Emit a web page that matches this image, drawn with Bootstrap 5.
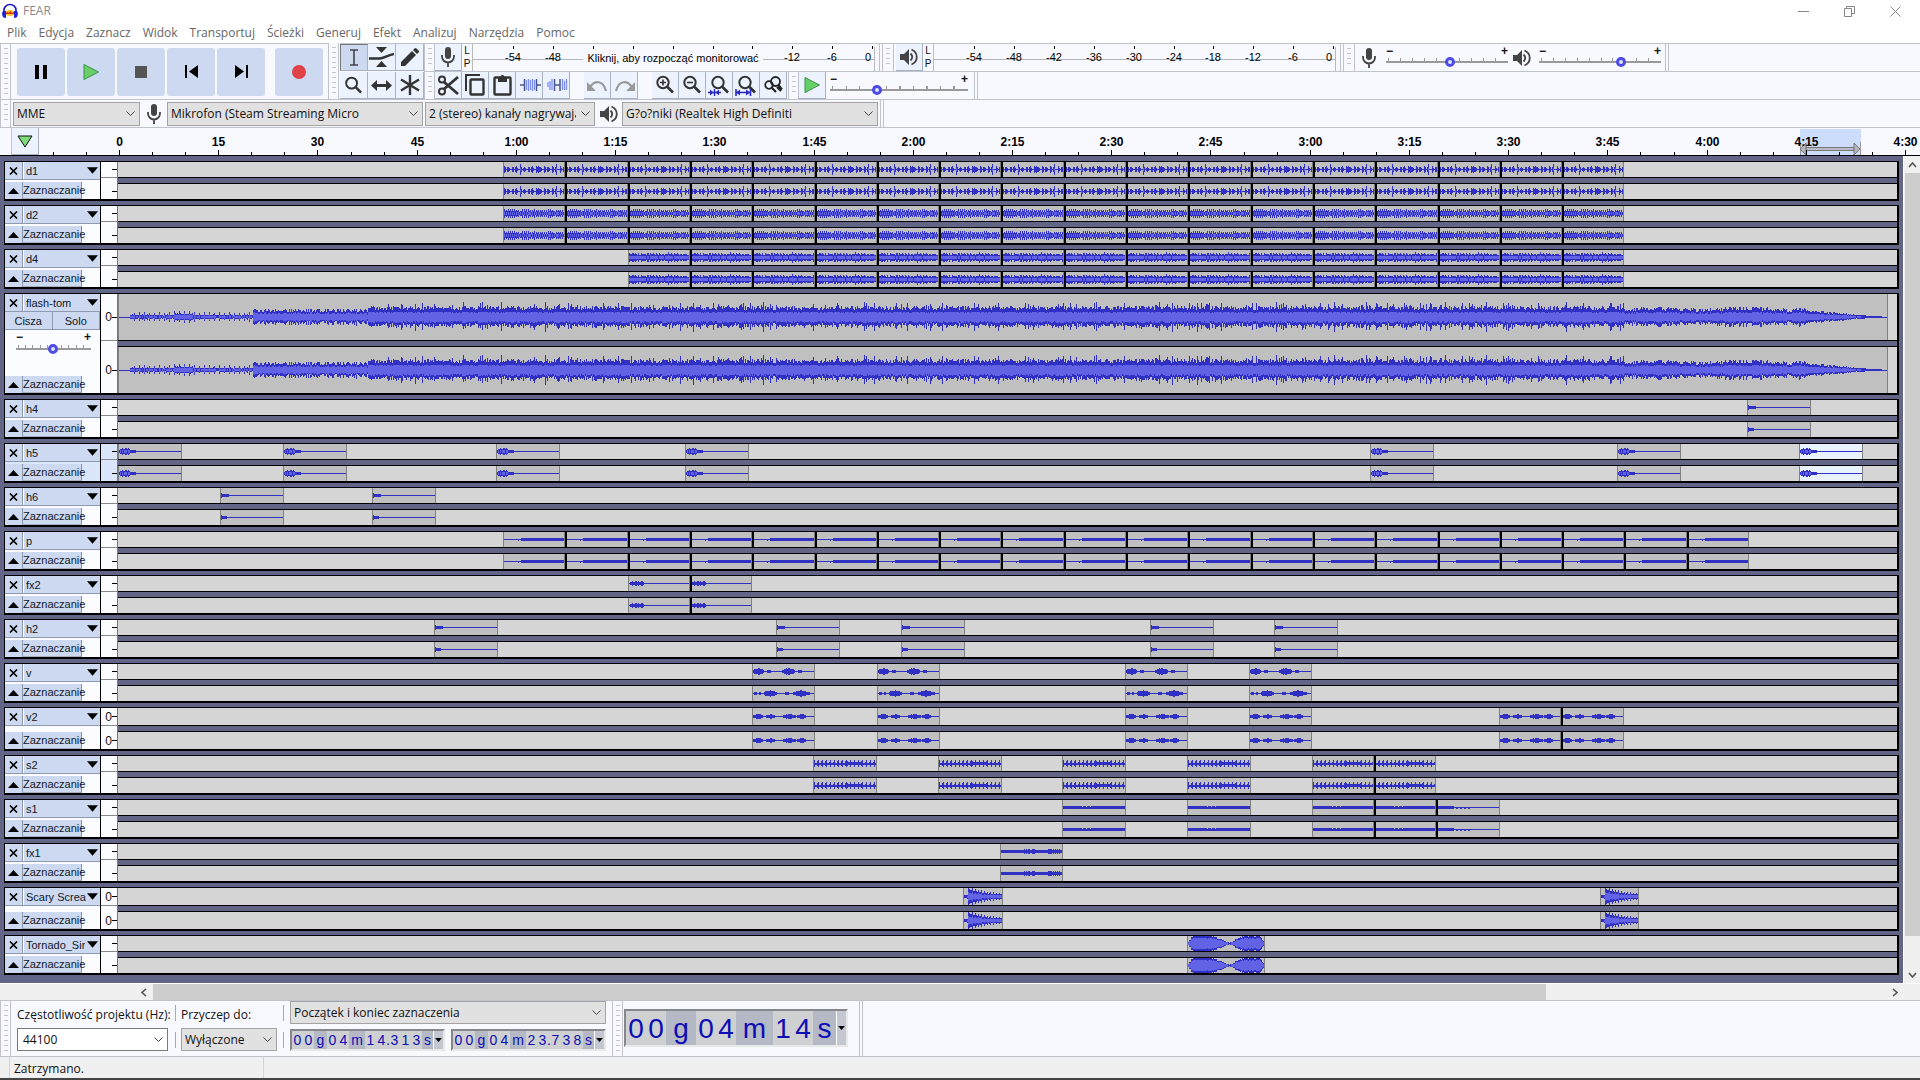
<!DOCTYPE html>
<html lang="pl">
<head>
<meta charset="utf-8">
<meta name="viewport" content="width=device-width, initial-scale=1">
<title>FEAR</title>
<link href="https://cdn.jsdelivr.net/npm/bootstrap@5.3.0/dist/css/bootstrap.min.css" rel="stylesheet">
<style>
:root{--line:#bfc3cb;--panel:#f8f9ff;--key:#ccd9f1;--desk:#636587}
body{font-family:"Open Sans","Noto Sans",sans-serif;font-size:12px;line-height:16px;color:#111;background:#fff}
button{padding:0;border:0;color:inherit}
svg{display:block;flex:none}
.titlebar{height:22px;color:#8a8a8a;padding:0 2px 0 2px;gap:5px}
.winbtn{width:46px;height:22px;background:none}
.menus{height:21px;padding-left:7px;gap:12px}
.menus a{color:#666;text-decoration:none;line-height:22px}
.dock{background:var(--panel)}
.dock-row{height:28px;border-top:1px solid var(--line)}
.grip{width:11px;flex:none;border-left:1px solid var(--line);border-right:1px solid var(--line);background:repeating-linear-gradient(#c4c7cf 0 1px,transparent 1px 5px) 3px 4px/4px calc(100% - 7px) no-repeat}
.grip-plain{width:12px;flex:none;border-right:1px solid var(--line)}
.dock-end{width:4px;border-left:1px solid var(--line);border-right:1px solid var(--line);flex:none}
.transport{height:56px;border-top:1px solid var(--line)}
.keys{gap:2px;padding:0 5px 0 6px}
.keys button{width:48px;height:48px;border-radius:3px;background:var(--key)}
.keys .rec{margin-left:8px}
.tbtn{width:27px;height:27px;flex:none;background:#edf3fe;border-right:1px solid #a9b2c3;border-bottom:1px solid #a9b2c3;display:flex;align-items:center;justify-content:center}
.gap-l2{margin-left:2px}
.gap-l14{margin-left:14px}
.gap-l6{margin-left:6px}
.gap-l1{margin-left:1px}
.toolgrid{display:grid;grid-template-columns:repeat(3,28px);grid-template-rows:28px 27px;margin-left:1px;border-top:1px solid var(--line);height:56px}
.toolgrid .tbtn{width:28px}
.toolgrid .tbtn.on{background:var(--key);border-top:1px solid #777;border-left:1px solid #777}
.lp{width:10px;font:10px/13px "Liberation Sans",sans-serif;text-align:center;flex:none}
.mtext{font:11px "Liberation Sans",sans-serif}
.vol{font:bold 12px/9px "Liberation Sans",sans-serif;flex:none;padding-top:3px}
.vol .ends{height:9px}
.vol input{display:block;width:100%;height:11px;margin:0;appearance:none;-webkit-appearance:none;background:linear-gradient(#9a9a9a,#9a9a9a) 0 5px/100% 2px no-repeat,repeating-linear-gradient(90deg,#9a9a9a 0 1px,transparent 1px 10%) 2px 2px/calc(100% - 3px) 4px no-repeat}
.vol input::-webkit-slider-thumb{-webkit-appearance:none;width:10px;height:10px;border-radius:50%;border:3px solid #4b4be8;background:#dfe4ee}
.v122{width:122px}.v138{width:138px}
.v-gain{padding:4px 9px 0 11px;line-height:6px}
.pick{height:24px;border:1px solid #a3a3a3;border-radius:0;background:#e1e1e1 url("data:image/svg+xml,%3Csvg xmlns='http://www.w3.org/2000/svg' width='9' height='6'%3E%3Cpath d='M.5.5l4 4 4-4' fill='none' stroke='%23444'/%3E%3C/svg%3E") right 4px center no-repeat;appearance:none;-webkit-appearance:none;font-size:12px;line-height:20px;padding:0 18px 0 3px;color:#111;flex:none}
.w-mme{width:127px}.w-dev{width:256px}.w-chn{width:170px;text-overflow:clip}.w-snap{width:96px}
.icobox{width:27px;display:flex;justify-content:center;flex:none}
.ruler{height:29px;border-top:1px solid var(--line);border-bottom:1px solid #000;background:var(--panel)}
.ruler text{font:bold 12px "Liberation Sans",sans-serif}
.desk{background:var(--desk)}
.tracks{padding:5px 4px 4px 4px;border-right:1px solid #fff;min-width:0}
.trk{border:solid #000;border-width:1px 2px 2px 1px;margin-bottom:4px;font:11px/16px "Liberation Sans",sans-serif;background:#fff}
.trk-head{width:96px;flex:none;border-right:1px solid #000;background:#fbfcff}
.trk-head button{background:var(--key);color:#101828}
.trk-top{height:18px;border-bottom:1px solid #8d99ae}
.trk-head .xbtn{width:18px;border-right:1px solid #8d99ae;display:flex;align-items:center;justify-content:center}
.trk-head .nm{display:flex;align-items:center;justify-content:space-between;border-left:1px solid #fff;padding:0 2px;overflow:hidden;white-space:nowrap}
.nm span{overflow:hidden}
.trk-low{height:17px}
.trk-low .selbtn{width:59px;border-right:1px solid #8a8f98;border-bottom:1px solid #a9afba;text-align:left;white-space:nowrap}
.ms-row{height:18px}
.ms-row button{border-bottom:1px solid #8d99ae;border-right:1px solid #8d99ae}
.ampl{width:17px;flex:none;border-right:1px solid #777;background:#fbfcff;font-size:12px}
.ampl div{display:flex;align-items:center;justify-content:flex-end}
.ampl div+div{padding-top:6px;border-top:1px solid #8a8a8a}
.ampl i{width:5px;height:1px;background:#000}
.picked .trk-head,.picked .ampl{background:#d9e6fc}
.split{height:7px;border:solid #000;border-width:1px 0;background:var(--desk)}
.lanes{min-width:0}
.lane-svg{width:100%;background:#d5d5d5}
.h15{height:15px}.h17{height:17px}.h46{height:46px}
.m1-15{height:15px}.m2-15{height:22px}.m1-17{height:17px}.m2-17{height:24px}.m1-46{height:46px}.m2-46{height:53px}
.vscroll{width:16px;background:#f0f0f0}
.vthumb{height:763px;background:#cdcdcd;margin-left:1px}
.sarr{height:17px;display:flex;align-items:center;justify-content:center}
.hscroll{height:17px;background:#f0f0f0;border-top:1px solid #fff;padding-left:135px;padding-right:16px}
.harr{width:18px;display:flex;align-items:center;justify-content:center}
.hthumb{background:#cdcdcd;width:1393px}
.foot{height:57px;border-top:1px solid var(--line);border-bottom:1px solid var(--line)}
.foot .pick{height:23px}
.fcol{display:flex;flex-direction:column;justify-content:space-between;padding:6px 6px 5px 5px}
.fcol-rate{padding:6px 7px 5px 6px;width:164px;white-space:nowrap}
.fcol-sel{padding:0 6px 5px 6px}
.tcs{gap:6px}
.bigbox{padding:0 11px 1px 1px}
.vsep{border-left:1px solid #aaa;height:16px}
.rate{width:151px;border:1px solid #7a7a7a;background-color:#fff;padding:0 0 0 5px}
.tc{border:2px solid;border-color:#85878c #e8e8e8 #e8e8e8 #85878c;background:#b5b9c5;color:#0d0db4;font-family:"Liberation Sans",sans-serif;height:22px;font-size:14px;line-height:19px}
.tc span{display:flex;justify-content:center}
.tc b{font-weight:400;width:11px;text-align:center}
.tc .dg{background:#cfd0d2}
.tc .dot{width:2px;display:flex;justify-content:center}
.tc .u1{width:13px}.tc .u2{width:16px}.tc .u3{width:11px}
.tc button{width:10px;background:#c3c7d2;border-left:1px solid #fff;display:flex;align-items:center;justify-content:center}
.tc.big{height:38px;font-size:28px;line-height:36px}
.tc.big b{width:20px}
.tc.big .u1{width:30px}.tc.big .u2{width:37px}.tc.big .u3{width:23px}
.status{background:#f0f0f0;height:23px;border-bottom:2px solid #444;padding-left:9px;line-height:23px}
.status div{border-left:1px solid #d5d5d5;padding-left:4px}
.status .s1{width:254px}
</style>
<script src="https://cdn.jsdelivr.net/npm/bootstrap@5.3.0/dist/js/bootstrap.bundle.min.js"></script>
</head>
<body>
<svg width="0" height="0" class="position-absolute">
  <defs>
    <symbol id="mic" viewBox="0 0 16 20"><rect x="5" y="0" width="6" height="12" rx="3" fill="#444"/><path d="M2 8v1.500a6 6 0 0 0 12 0V8M8 15.500V20" fill="none" stroke="#444" stroke-width="1.800"/></symbol>
    <symbol id="spk" viewBox="0 0 18 18"><path d="M0 6h4l5-5v16l-5-5H0z" fill="#444"/><path d="M10.500 5.500q3.500 3.500 0 7M11.500 1.500c7 3 7 12 0 15" fill="none" stroke="#444" stroke-width="1.800"/></symbol>
    <symbol id="mag" viewBox="0 0 20 20"><circle cx="8" cy="7.500" r="5.700" fill="none" stroke="#333" stroke-width="2"/><path d="M12 11.500l6 6" stroke="#333" stroke-width="2.600"/></symbol>
    <symbol id="down" viewBox="0 0 12 7"><path d="M0 0h12L6 7z"/></symbol>
    <symbol id="up" viewBox="0 0 11 6"><path d="M5.500 0L11 6H0z"/></symbol>
    <symbol id="cross" viewBox="0 0 9 8"><path d="M1 .5l7 7M8 .5l-7 7" stroke="#000" stroke-width="1.600"/></symbol>
    <symbol id="play" viewBox="0 0 16 16"><path d="M1 0.500L15.500 8L1 15.500z" fill="#66cf66" stroke="#3f8f4a"/></symbol>
  </defs>
</svg>

<div class="d-flex flex-column min-vh-100">
  <header>
    <div class="titlebar d-flex align-items-center">
      <svg width="16" height="16" viewBox="0 0 16 16"><ellipse cx="8" cy="10" rx="5" ry="3" fill="#f6c21c"/><path d="M3.500 10.500h9l-1.500-1-1 1.500-1.500-2.500-1.500 2-1-1z" fill="#e03018" stroke="#e03018"/><path d="M2 9V7a6 5.500 0 0 1 12 0v2" fill="none" stroke="#1414c8" stroke-width="1.600"/><path d="M1 8c-1.500 2-1 5 .5 6.500L4 15V8zM15 8c1.500 2 1 5-.5 6.500L12 15V8z" fill="#2323dd"/></svg>
      <span>FEAR</span>
      <div class="d-flex ms-auto">
        <button class="winbtn" aria-label="Minimalizuj"><svg class="mx-auto" width="11" height="11"><path d="M0 5.500h11" stroke="#888"/></svg></button>
        <button class="winbtn" aria-label="Przywróć"><svg class="mx-auto" width="11" height="11"><path d="M.5 2.500h7v8h-7zM2.500 2V.5h8v7H8" fill="none" stroke="#888"/></svg></button>
        <button class="winbtn" aria-label="Zamknij"><svg class="mx-auto" width="11" height="11"><path d="M.5.5l10 10M10.500.5l-10 10" stroke="#888"/></svg></button>
      </div>
    </div>
    <nav class="menus d-flex">
      <a href="#">Plik</a><a href="#">Edycja</a><a href="#">Zaznacz</a><a href="#">Widok</a><a href="#">Transportuj</a><a href="#">Ścieżki</a><a href="#">Generuj</a><a href="#">Efekt</a><a href="#">Analizuj</a><a href="#">Narzędzia</a><a href="#">Pomoc</a>
    </nav>
  </header>

  <div class="dock d-flex">
    <div class="transport d-flex">
      <div class="grip"></div>
      <div class="keys d-flex align-items-center">
        <button aria-label="Wstrzymaj"><svg class="mx-auto" width="12" height="14"><path d="M0 0h4v14H0zM8 0h4v14H8z"/></svg></button>
        <button aria-label="Odtwórz"><svg class="mx-auto" width="16" height="16"><use href="#play"/></svg></button>
        <button aria-label="Zatrzymaj"><svg class="mx-auto" width="12" height="12"><path d="M0 0h12v12H0z" fill="#555"/></svg></button>
        <button aria-label="Na początek"><svg class="mx-auto" width="13" height="13"><path d="M0 0h2v13H0zM13 0v13L4 6.500z"/></svg></button>
        <button aria-label="Na koniec"><svg class="mx-auto" width="13" height="13"><path d="M11 0h2v13h-2zM0 0v13l9-6.500z"/></svg></button>
        <button class="rec" aria-label="Nagrywaj"><svg class="mx-auto" width="14" height="14"><circle cx="7" cy="7" r="7" fill="#e04247"/></svg></button>
      </div>
    </div>
    <div class="grip"></div>
    <div class="toolgrid">
      <button class="tbtn on" aria-label="Zaznaczanie"><svg width="10" height="17"><path d="M1 1h8M1 16h8M5 1v15" stroke="#444" stroke-width="1.600"/></svg></button>
      <button class="tbtn" aria-label="Obwiednia"><svg width="25" height="20"><path d="M7 0h11l-5.500 6zM7 20h11l-5.500-6z" fill="#333"/><path d="M0 11.500h11c5-.5 8-3.500 14-4.500" fill="none" stroke="#333" stroke-width="2.600"/></svg></button>
      <button class="tbtn" aria-label="Rysowanie"><svg width="19" height="19"><path d="M1 14L12 3l4 4L5 18H1zM13 2l1.500-1.500q1-1 2 0l2 2q1 1 0 2L17 6z" fill="#333"/></svg></button>
      <button class="tbtn" aria-label="Powiększenie"><svg width="19" height="19"><use href="#mag"/></svg></button>
      <button class="tbtn" aria-label="Przesuwanie"><svg width="21" height="13"><path d="M0 6.500L6 1v4h9V1l6 5.500L15 12V8H6v4z" fill="#333"/></svg></button>
      <button class="tbtn" aria-label="Wielonarzędziowy"><svg width="20" height="20"><path d="M10 0v20M1 4.500l18 11M19 4.500l-18 11" stroke="#333" stroke-width="2.400"/></svg></button>
    </div>
    <div class="flex-grow-1">
      <div class="dock-row d-flex align-items-stretch">
        <div class="grip"></div>
        <button class="tbtn" aria-label="Poziom nagrywania"><svg width="16" height="20"><use href="#mic"/></svg></button>
        <div class="lp"><div>L</div><div>P</div></div>
        <svg class="mtext" id="recMeter" width="403" height="27"></svg>
        <div class="dock-end ms-1"></div><div class="grip border-start-0"></div>
        <button class="tbtn gap-l2" aria-label="Poziom odtwarzania"><svg width="18" height="18"><use href="#spk"/></svg></button>
        <div class="lp"><div>L</div><div>P</div></div>
        <svg class="mtext" id="playMeter" width="403" height="27"></svg>
        <div class="dock-end ms-1"></div><div class="grip border-start-0"></div>
        <div class="icobox align-items-center"><svg width="16" height="20"><use href="#mic"/></svg></div>
        <div class="vol v122 ms-1"><div class="ends d-flex justify-content-between"><span>−</span><span>+</span></div><input type="range" value="53" aria-label="Głośność nagrywania"></div>
        <div class="icobox align-items-center"><svg width="18" height="18"><use href="#spk"/></svg></div>
        <div class="vol v122 ms-1"><div class="ends d-flex justify-content-between"><span>−</span><span>+</span></div><input type="range" value="69" aria-label="Głośność odtwarzania"></div>
        <div class="dock-end ms-1"></div>
      </div>
      <div class="dock-row d-flex align-items-stretch">
        <div class="grip"></div>
        <button class="tbtn" aria-label="Wytnij"><svg width="21" height="21"><path d="M6 7L20 19M6 14L20 2" stroke="#333" stroke-width="2.800"/><circle cx="4" cy="4.500" r="3" fill="none" stroke="#333" stroke-width="2"/><circle cx="4" cy="16.500" r="3" fill="none" stroke="#333" stroke-width="2"/></svg></button>
        <button class="tbtn" aria-label="Kopiuj"><svg width="20" height="22"><path d="M1 17V1h14" fill="none" stroke="#333" stroke-width="2"/><rect x="5.500" y="5.500" width="13" height="15" rx="1" fill="none" stroke="#333" stroke-width="2.400"/></svg></button>
        <button class="tbtn" aria-label="Wklej"><svg width="19" height="22"><rect x="1.500" y="3.500" width="16" height="17" rx="1" fill="none" stroke="#333" stroke-width="2.400"/><path d="M5 3h2.500a2 2 0 0 1 4 0H14v5H5z" fill="#333"/></svg></button>
        <button class="tbtn" aria-label="Przytnij"><svg width="23" height="14"><path d="M2 7h4M19 7h4M6.500 1v12M18.500 1v12" stroke="#4a5590" stroke-width="1.500"/><path d="M8.500 2v10M10.500 1v12M12.500 2v10M14.500 1v12M16.500 2v10" stroke="#7d8ff0" stroke-width="1.300"/></svg></button>
        <button class="tbtn" aria-label="Wycisz"><svg width="23" height="14"><path d="M3 4v5M5 3v9M7 1v11M17.500 1v11M19.500 3v9M21.500 1v11" stroke="#7d8ff0" stroke-width="1.300"/><path d="M9.500 1v12M15 1v12M9 7h6" stroke="#4a5590" stroke-width="1.500"/></svg></button>
        <button class="tbtn gap-l14" aria-label="Cofnij"><svg width="21" height="13"><path d="M3 8c5-7 13-7 16 4" fill="none" stroke="#999" stroke-width="2.200"/><path d="M0 3v9h9z" fill="#999"/></svg></button>
        <button class="tbtn" aria-label="Ponów"><svg width="21" height="13"><path d="M18 8C13 1 5 1 2 12" fill="none" stroke="#999" stroke-width="2.200"/><path d="M21 3v9h-9z" fill="#999"/></svg></button>
        <button class="tbtn gap-l14" aria-label="Powiększ"><svg width="20" height="20"><use href="#mag"/><path d="M5 7.500h6M8 4.500v6" stroke="#333" stroke-width="1.600"/></svg></button>
        <button class="tbtn" aria-label="Pomniejsz"><svg width="20" height="20"><use href="#mag"/><path d="M5 7.500h6" stroke="#333" stroke-width="1.600"/></svg></button>
        <button class="tbtn" aria-label="Dopasuj zaznaczenie"><svg width="22" height="21"><use href="#mag" x="2" width="20" height="20"/><path d="M0 17.500h13M6.500 14v7" stroke="#2727c4" stroke-width="1.400"/><path d="M5.500 17.500L2 14.500v6zM7.500 17.500l3.500-3v6z" fill="#2727c4"/></svg></button>
        <button class="tbtn" aria-label="Dopasuj projekt"><svg width="23" height="21"><use href="#mag" x="2" width="20" height="20"/><path d="M1 17.500h14M1 14v7M15.500 14v7" stroke="#2727c4" stroke-width="1.600"/><path d="M1 17.500l4-3v6zM15 17.500l-4-3v6z" fill="#2727c4"/></svg></button>
        <button class="tbtn" aria-label="Przełącz powiększenie"><svg width="19" height="18"><circle cx="5" cy="9" r="3.800" fill="none" stroke="#222" stroke-width="1.800"/><circle cx="11.500" cy="5.500" r="4.500" fill="none" stroke="#222" stroke-width="1.800"/><path d="M7 11l5 5M14 8.500l4 5M13 11l4 4" stroke="#222" stroke-width="2.200"/></svg></button>
        <div class="grip gap-l1"></div>
        <button class="tbtn" aria-label="Odtwórz z prędkością"><svg width="16" height="16"><use href="#play"/></svg></button>
        <div class="vol v138 ms-1"><div class="ends d-flex justify-content-between"><span>−</span><span>+</span></div><input type="range" value="33" aria-label="Prędkość odtwarzania"></div>
        <div class="dock-end gap-l6"></div>
      </div>
    </div>
  </div>

  <div class="dock dock-row d-flex align-items-center">
    <div class="grip align-self-stretch"></div>
    <select class="pick w-mme gap-l2" aria-label="Host"><option>MME</option></select>
    <div class="icobox"><svg width="16" height="20"><use href="#mic"/></svg></div>
    <select class="pick w-dev" aria-label="Urządzenie nagrywające"><option>Mikrofon (Steam Streaming Micro</option></select>
    <select class="pick w-chn gap-l2" aria-label="Kanały"><option>2 (stereo) kanały nagrywając</option></select>
    <div class="icobox"><svg width="18" height="18"><use href="#spk"/></svg></div>
    <select class="pick w-dev" aria-label="Urządzenie odtwarzające"><option>G?o?niki (Realtek High Definiti</option></select>
    <div class="dock-end align-self-stretch gap-l2"></div>
  </div>

  <div class="ruler d-flex">
    <div class="grip-plain"></div>
    <button class="tbtn h-100" aria-label="Przypnij głowicę"><svg width="16" height="13"><path d="M1 1h14L8 12z" fill="#7ddb7a" stroke="#111"/></svg></button>
    <svg id="timeline" class="flex-grow-1" height="27" width="1" overflow="hidden"></svg>
  </div>

  <main class="desk d-flex flex-grow-1">
    <div class="tracks flex-grow-1" id="tracks"></div>
    <div class="vscroll d-flex flex-column">
      <div class="sarr"><svg width="9" height="6"><path d="M1 5l3.500-4L8 5" fill="none" stroke="#555" stroke-width="1.600"/></svg></div>
      <div class="vthumb"></div>
      <div class="sarr mt-auto"><svg width="9" height="6"><path d="M1 1l3.500 4L8 1" fill="none" stroke="#555" stroke-width="1.600"/></svg></div>
    </div>
  </main>
  <div class="hscroll d-flex">
    <div class="harr"><svg width="6" height="9"><path d="M5 1L1 4.500 5 8" fill="none" stroke="#555" stroke-width="1.600"/></svg></div>
    <div class="hthumb"></div>
    <div class="harr ms-auto"><svg width="6" height="9"><path d="M1 1l4 3.500L1 8" fill="none" stroke="#555" stroke-width="1.600"/></svg></div>
  </div>

  <footer>
    <div class="foot dock d-flex">
      <div class="grip"></div>
      <div class="fcol fcol-rate">
        <label for="rate">Częstotliwość projektu (Hz):</label>
        <select id="rate" class="pick rate"><option>44100</option></select>
      </div>
      <div class="d-flex flex-column justify-content-between py-1"><div class="vsep"></div><div class="vsep mb-1"></div></div>
      <div class="fcol">
        <label for="snap">Przyczep do:</label>
        <select id="snap" class="pick w-snap"><option>Wyłączone</option></select>
      </div>
      <div class="d-flex flex-column justify-content-between py-1"><div class="vsep"></div><div class="vsep mb-1"></div></div>
      <div class="fcol fcol-sel">
        <select class="pick" aria-label="Tryb zaznaczenia"><option>Początek i koniec zaznaczenia</option></select>
        <div class="d-flex tcs">
          <div class="tc d-flex" data-time="00g04m14.313s"></div>
          <div class="tc d-flex" data-time="00g04m23.738s"></div>
        </div>
      </div>
      <div class="grip"></div>
      <div class="d-flex align-items-center bigbox"><div class="tc big d-flex" data-time="00g04m14s"></div></div>
      <div class="dock-end"></div>
    </div>
    <div class="status d-flex"><div class="s1">Zatrzymano.</div><div></div></div>
  </footer>
</div>

<script>
// Input and output level scales, in dB
function meter(id, labels, note) {
  let s = '<path d="M.5 0V27M402.500 3V27" stroke="#bbb"/><path d="M0 15.500H403" stroke="#b4b6bd"/>';
  for (let i = 0; i < 10; i++) {
    const x = Math.round(41 + i * 39.9);
    s += `<path d="M${x + .5} 2V5" stroke="#000"/>`;
    const v = -54 + i * 6;
    if (labels.includes(v)) s += `<text x="${v === 0 ? x - 4 : x}" y="17" text-anchor="middle">${v}</text>`;
  }
  if (note) s += `<rect x="111" y="6" width="180" height="18" fill="#f8f9ff"/><text x="201" y="18" text-anchor="middle">${note}</text>`;
  document.getElementById(id).innerHTML = s;
}
meter('recMeter', [-54, -48, -12, -6, 0], 'Kliknij, aby rozpocząć monitorować');
meter('playMeter', [-54, -48, -42, -36, -30, -24, -18, -12, -6, 0]);

// Timeline: a tick each 5 seconds, a label each 15
(function () {
  const x0 = 80.500, pps = 6.615;
  let s = '<rect x="1761" y="1" width="61" height="26" fill="#ccdcfb"/>';
  s += '<path d="M1761.500 14V27M1821.500 14V27" stroke="#999"/><path d="M1767 19.500H1815v3H1767z" fill="#b9bcc8" stroke="#777"/><path d="M1761 21l6-6v12zM1821 21l-6-6v12z" fill="#b5b5bd" stroke="#777"/>';
  for (let t = -10; t <= 275; t += 5) {
    const x = Math.floor(x0 + t * pps) + .5, big = t % 15 === 0 && t >= 0;
    s += `<path d="M${x} ${big ? 22 : 24}V27" stroke="#000"/>`;
    if (big) s += `<text x="${x}" y="18" text-anchor="middle">${t < 60 ? t : Math.floor(t / 60) + ':' + String(t % 60).padStart(2, '0')}</text>`;
  }
  document.getElementById('timeline').innerHTML = s;
})();

// Repeatable noise, so that copies of one clip look alike
function noise(n) { const v = Math.sin(n * 127.1 + 11.7) * 43758.5453; return v - Math.floor(v); }
// Height of the widest of several short bursts at column i
function bursts(i, list) { let m = 0; for (const [c, half, a] of list) if (Math.abs(i - c) <= half) m = Math.max(m, a * (1 - Math.abs(i - c) / (half * 2)) + noise(i) * .7); return m; }
// Peak height in pixels at column i of a clip w columns wide; ch is the channel
const shapes = {
  d1: (i, w) => [.8, 3.600, 2.600, .8, 2.600, 3.600, 1.500, .8][i % 8] * (.6 + noise(i) * .5) + (i % 18 === 17 ? 2.500 : 0),
  d2: (i, w) => [1.600, 3.800, 2.200, 3.800][i % 4] * (.6 + noise(i + 3) * .5) + .5,
  d4: (i, w) => [2, 3.600, 2.800][i % 3] + noise(i + 9) * 1.500,
  h4: (i, w, ch) => i < 2 ? 2.600 : i < (ch ? 7 : 9) ? 1.900 : 0,
  h5: (i, w) => i < 2 ? 1.200 : i < 12 ? 1.900 + noise(i) * 1.300 : i < 18 ? 1.700 : 0,
  p: (i, w) => i < 18 ? (i > 12 && i % 3 === 0 ? 1 : 0) : 1.500,
  fx2: (i, w) => i < 2 ? .5 : i < 16 ? 1.400 + noise(i) * .8 : 0,
  v: (i, w, ch) => bursts(i, ch ? [[3, 2, 1], [7, 1, 1], [18, 6, 2.600], [35, 3, 1], [48, 7, 2.600], [56, 1, 1]] : [[6, 5, 2.800], [17, 2, 1.200], [36, 6, 3], [47, 2, 1.200]]),
  v2: (i, w) => bursts(i, [[5, 5, 2.200], [18, 4, 2], [37, 6, 2.200], [49, 4, 2]]),
  s2: (i, w) => i % 4 === 1 ? 3.300 : i % 4 === 0 ? 1.500 + noise(i) : 1 + (i > 33 && i < 48 ? 1.500 * noise(i) : 0),
  s1: (i, w) => i > 19 && i < 32 && i % 4 === 0 ? 1 : 1.500,
  s1end: (i, w) => i < 18 ? 1.500 : i < 34 && i % 4 < 2 ? 1 : 0,
  fx1: (i, w) => 1.200 + (i > 22 ? noise(i) * 1.500 : noise(i) * .5),
  scary: (i, w) => i < 4 ? 1 + noise(i) : i < 5 ? 2 : i < 8 ? 8.500 - noise(i) * 2 : (6 * Math.exp(-(i - 8) / 18) + 1.800) * (i % 3 === 0 ? 1.150 : .65 + noise(i + 2) * .2),
  tornado: (i, w) => { const f = i / w; const e = f < .07 ? f / .07 : f < .3 ? 1 : f < .54 ? 1 - (f - .3) / .24 * .9 : f < .72 ? .1 + (f - .54) / .18 * .85 : f < .92 ? 1 : (1 - f) / .08; return Math.min(7.500, Math.max(.5, e * 8.500 * (.8 + noise(i) * .3))); },
  flash: (i, w) => {
    if (i < 12) return 0;
    if (i < 135) return (i % 5 === 1 ? 4 : 1.400) + noise(i) * 1.200 + (i > 55 && i < 75 ? 1.500 : 0);
    if (i < 250) return 4.500 + noise(i) * 4 + (i < 140 ? 2 : 0);
    if (i < 1507) return 7 + noise(i) * 4 + (noise(i * 3.7) > .88 ? 4 : 0);
    if (i < 1690) return 4.500 + noise(i) * 4 + 2 * Math.abs(Math.sin(i / 28));
    if (i < 1740) return (4.500 + noise(i) * 3) * (1 - (i - 1690) / 75);
    return Math.max(0, 2 - (i - 1740) / 16);
  }
};
// Share of the peak that the lighter RMS band fills
const rmsShare = { flash: .55, tornado: .7, scary: .5, d1: .25, d2: .35, d4: .4, h5: .4 };
const run = (x, n, len = 62.3) => Array.from({ length: n }, (_, k) => [x + k * len, x + (k + 1) * len, k > 0]);
const at = (xs, len = 63) => xs.map(x => [x, x + len]);
// Clip edges are columns of the lane, which is 1779 columns wide
const tracks = [
  { name: 'd1', shape: 'd1', clips: run(385, 18) },
  { name: 'd2', shape: 'd2', clips: run(385, 18) },
  { name: 'd4', shape: 'd4', clips: run(509.6, 16) },
  { name: 'flash-tom', shape: 'flash', clips: [[0, 1770]], lane: 46 },
  { name: 'h4', shape: 'h4', clips: at([1629], 64) },
  { name: 'h5', shape: 'h5', clips: [...at([0, 165, 378, 567, 1252, 1499], 64), [1681, 1745, false, true]], picked: true },
  { name: 'h6', shape: 'h4', clips: at([102, 254], 64) },
  { name: 'p', shape: 'p', clips: run(385, 20) },
  { name: 'fx2', shape: 'fx2', clips: run(509.6, 2) },
  { name: 'h2', shape: 'h4', clips: at([316, 658, 783, 1032, 1156], 64) },
  { name: 'v', shape: 'v', clips: at([634, 759, 1007, 1131]) },
  { name: 'v2', shape: 'v2', clips: [...at([634, 759, 1007, 1131]), ...run(1381, 2)], lane: 17 },
  { name: 's2', shape: 's2', clips: [...at([695, 820, 944, 1069], 64), ...run(1193.6, 2)] },
  { name: 's1', shape: 's1', clips: [...at([944, 1069], 64), ...run(1193.6, 2), [1318, 1382, true, false, 's1end']] },
  { name: 'fx1', shape: 'fx1', clips: at([882]) },
  { name: 'Scary Screa', shape: 'scary', clips: [[845, 885], [1482, 1521]], lane: 17 },
  { name: 'Tornado_Sir', shape: 'tornado', clips: [[1069, 1147]] }
];
function lane(t, ch, h) {
  const c = h / 2;
  let bg = '', peak = '', rms = '', edge = '', join = '';
  for (const [a0, b0, joined, sel, shape] of t.clips) {
    const a = Math.round(a0), b = Math.round(b0), w = b - a, f = shapes[shape || t.shape];
    bg += `<rect x="${a}" y="0" width="${w}" height="${h}" fill="${sel ? '#e9f2ff' : '#c0c0c0'}"/>`;
    edge += `M${b - .5} 0V${h}`;
    if (joined) join += `M${a + 1} 0V${h}`; else edge += `M${a + .5} 0V${h}`;
    peak += `M${a + 1} ${c}H${b - 1}`;
    for (let i = 1; i < w - 1; i++) {
      const p = Math.min(f(i, w, ch), h / 2);
      if (p <= .5) continue;
      const lo = t.lane === 46 ? p * (.8 + noise(i * 1.3) * .25) : p;
      peak += `M${a + i + .5} ${Math.round(c - p)}V${Math.round(c + lo)}`;
      const r = Math.min(p * (rmsShare[t.shape] || 0), 5.500);
      if (r >= 1) rms += `M${a + i + .5} ${Math.round(c - r)}V${Math.round(c + r)}`;
    }
  }
  return `<svg class="lane-svg h${h}" viewBox="0 0 1779 ${h}" preserveAspectRatio="none" shape-rendering="crispEdges">${bg}<path d="${peak}" stroke="#3030c4"/><path d="${rms}" stroke="#6262e4"/><path d="${edge}" stroke="#808080"/><path d="${join}" stroke="#000" stroke-width="2"/></svg>`;
}
document.getElementById('tracks').innerHTML = tracks.map(t => {
  const h = t.lane || 15, zero = h > 15 ? '0' : '';
  const gain = h === 46 ? `<div class="ms-row d-flex"><button class="w-50">Cisza</button><button class="w-50">Solo</button></div>
    <div class="vol v-gain"><div class="ends d-flex justify-content-between"><span>−</span><span>+</span></div><input type="range" value="49" aria-label="Wzmocnienie"></div>` : '';
  return `<section class="trk d-flex${t.picked ? ' picked' : ''}">
    <div class="trk-head d-flex flex-column">
      <div class="trk-top d-flex"><button class="xbtn" aria-label="Usuń ${t.name}"><svg width="9" height="8"><use href="#cross"/></svg></button><button class="nm flex-grow-1"><span>${t.name}</span><svg width="11" height="7"><use href="#down"/></svg></button></div>
      ${gain}
      <div class="trk-low d-flex mt-auto"><button class="xbtn" aria-label="Zwiń ${t.name}"><svg width="11" height="6"><use href="#up"/></svg></button><button class="selbtn">Zaznaczanie</button></div>
    </div>
    <div class="ampl"><div class="m1-${h}">${zero}<i></i></div><div class="m2-${h}">${zero}<i></i></div></div>
    <div class="lanes flex-grow-1">${lane(t, 0, h)}<div class="split"></div>${lane(t, 1, h)}</div>
  </section>`;
}).join('');

// Time fields: one cell for each digit or unit
document.querySelectorAll('[data-time]').forEach(el => {
  const unit = { g: 'u1', m: 'u2', s: 'u3' };
  el.innerHTML = el.dataset.time.match(/[\d.]+|[a-z]/g).map(part => unit[part]
    ? `<span class="${unit[part]}">${part}</span>`
    : `<span class="dg">${[...part].map(c => `<b${c === '.' ? ' class="dot"' : ''}>${c}</b>`).join('')}</span>`).join('')
    + '<button aria-label="Format czasu"><svg width="7" height="4" viewBox="0 0 12 7"><use href="#down"/></svg></button>';
});
</script>
</body>
</html>
